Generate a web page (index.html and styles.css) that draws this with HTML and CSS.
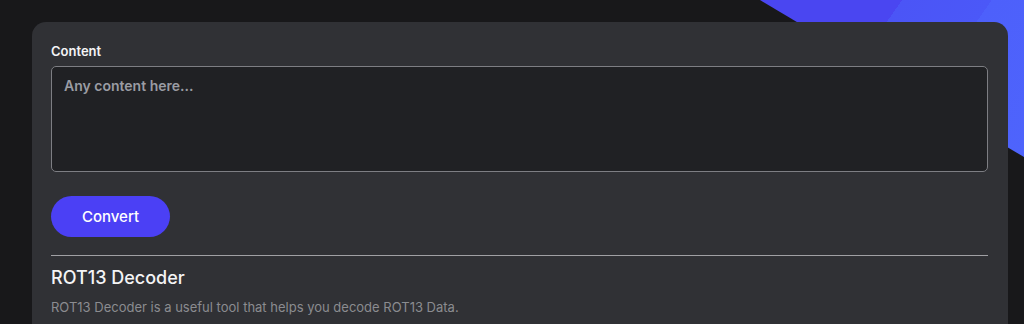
FILE: index.html
```html
<!DOCTYPE html>
<html lang="en">
<head>
<meta charset="UTF-8" />
<meta name="viewport" content="width=device-width, initial-scale=1.0"/>
<title>ROT13 Decoder</title>
<link rel="stylesheet" href="styles.css">
</head>
<body>

<div class="backdrop"></div>

<div class="page">
  <div class="tool-card">
    <label for="content" class="field-label">Content</label>
    <textarea id="content" class="content-input" placeholder="Any content here..."></textarea>

    <button class="convert-btn">Convert</button>

    <hr class="divider" />

    <h2 class="tool-title">ROT13 Decoder</h2>
    <p class="tool-desc">ROT13 Decoder is a useful tool that helps you decode ROT13 Data.</p>
  </div>
</div>

</body>
</html>
```

FILE: styles.css
```css
body {
  margin: 0;
  background-color: #18181a;
  font-family: Inter, "Noto Sans", sans-serif;
  overflow: hidden;
}

/* blue corner decoration */
.backdrop {
  position: absolute;
  top: 0;
  right: 0;
  width: 264px;
  height: 157px;
  clip-path: polygon(0 0, 100% 0, 100% 100%);
  background: linear-gradient(125deg, #4a46f1 0%, #4a46f1 38%, #4b55f6 38%, #4b58f8 62%, #4d60fb 62%, #4e64fc 100%);
}

.page {
  position: relative;
  box-sizing: border-box;
  height: 100vh;
  display: flex;
  flex-direction: column;
  padding: 22px 16px 0 32px;
}

.tool-card {
  flex: 1;
  background-color: #303135;
  border-radius: 14px 14px 0 0;
  padding: 19px 20px 0 19px;
}

.field-label {
  display: block;
  color: #f4f4f5;
  font-size: 13px;
  font-weight: 600;
  line-height: 20px;
  margin-bottom: 5px;
}

.content-input {
  display: block;
  width: 100%;
  height: 106px;
  box-sizing: border-box;
  background-color: #202124;
  border: 1px solid #7d7e83;
  border-radius: 5px;
  padding: 10px 12px;
  color: #e4e4e7;
  font-family: inherit;
  font-size: 14px;
  font-weight: 600;
  resize: none;
  outline: none;
}

.content-input::placeholder {
  color: #9a9ca3;
}

.convert-btn {
  display: block;
  margin-top: 24px;
  width: 119px;
  height: 41px;
  border: none;
  border-radius: 21px;
  background-color: #4b40f5;
  color: #ffffff;
  font-family: inherit;
  font-size: 15px;
  font-weight: 500;
  cursor: pointer;
}

.convert-btn:hover {
  background-color: #3d33e0;
}

.divider {
  border: none;
  border-top: 1px solid #a0a0a4;
  margin: 18px 0 0 0;
}

.tool-title {
  margin: 10px 0 0 0;
  color: #f4f4f5;
  font-size: 18px;
  font-weight: 500;
  line-height: 24px;
}

.tool-desc {
  margin: 7px 0 0 0;
  color: #8b8c90;
  font-size: 13px;
  line-height: 20px;
}
```
